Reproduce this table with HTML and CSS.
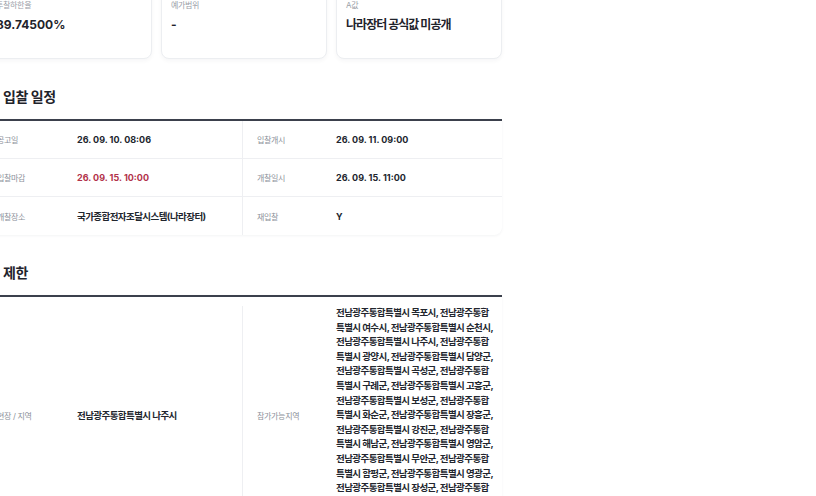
FILE: index.html
```html
<!DOCTYPE html>
<html lang="ko">
<head>
<meta charset="utf-8">
<link rel="stylesheet" href="styles.css">
</head>
<body>
<div class="page">
  <div class="cards">
    <div class="card">
      <div class="card-label ko">투찰하한율</div>
      <div class="card-value">89.74500%</div>
    </div>
    <div class="card">
      <div class="card-label ko">예가범위</div>
      <div class="card-value">-</div>
    </div>
    <div class="card">
      <div class="card-label ko">A값</div>
      <div class="card-value ko-tight">나라장터 공식값 미공개</div>
    </div>
  </div>

  <h2 class="section-title"><span class="title-icon"></span><span>입찰 일정</span></h2>
  <div class="table">
    <div class="row">
      <div class="label ko">공고일</div>
      <div class="value">26. 09. 10. 08:06</div>
      <div class="label ko divider">입찰개시</div>
      <div class="value">26. 09. 11. 09:00</div>
    </div>
    <div class="row">
      <div class="label ko">입찰마감</div>
      <div class="value red">26. 09. 15. 10:00</div>
      <div class="label ko divider">개찰일시</div>
      <div class="value">26. 09. 15. 11:00</div>
    </div>
    <div class="row">
      <div class="label ko">개찰장소</div>
      <div class="value ko-val">국가종합전자조달시스템(나라장터)</div>
      <div class="label ko divider">재입찰</div>
      <div class="value">Y</div>
    </div>
  </div>

  <h2 class="section-title"><span class="title-icon"></span><span>제한</span></h2>
  <div class="table">
    <div class="row tall">
      <div class="label ko">현장 / 지역</div>
      <div class="value ko-val">전남광주통합특별시 나주시</div>
      <div class="label ko divider">참가가능지역</div>
      <div class="value ko-val multi">전남광주통합특별시 목포시, 전남광주통합<br>특별시 여수시, 전남광주통합특별시 순천시,<br>전남광주통합특별시 나주시, 전남광주통합<br>특별시 광양시, 전남광주통합특별시 담양군,<br>전남광주통합특별시 곡성군, 전남광주통합<br>특별시 구례군, 전남광주통합특별시 고흥군,<br>전남광주통합특별시 보성군, 전남광주통합<br>특별시 화순군, 전남광주통합특별시 장흥군,<br>전남광주통합특별시 강진군, 전남광주통합<br>특별시 해남군, 전남광주통합특별시 영암군,<br>전남광주통합특별시 무안군, 전남광주통합<br>특별시 함평군, 전남광주통합특별시 영광군,<br>전남광주통합특별시 장성군, 전남광주통합<br>특별시 완도군, 전남광주통합특별시 진도군,<br>전남광주통합특별시 신안군</div>
    </div>
  </div>
</div>
</body>
</html>
```

FILE: styles.css
```css
* { box-sizing: border-box; }
html, body { margin: 0; padding: 0; background: #ffffff; }
body {
  font-family: Inter, "Noto Sans CJK KR", sans-serif;
  color: #1f232b;
  overflow: hidden;
}
.page {
  width: 519px;
  margin-left: -17px;
  margin-top: -14px;
}
.ko { letter-spacing: -0.04em; }
.ko-tight { letter-spacing: -0.08em; }

.cards {
  display: grid;
  grid-template-columns: repeat(3, 1fr);
  gap: 9px;
  margin-left: 3px;
}
.card {
  background: #fff;
  border: 1px solid #eceef1;
  border-radius: 8px;
  box-shadow: 0 2px 4px rgba(20, 30, 50, 0.04);
  height: 73px;
  padding: 12px 9px;
}
.card-label {
  font-size: 8px;
  color: #9aa0a8;
  line-height: 12px;
}
.card-value {
  margin-top: 6px;
  font-size: 12px;
  font-weight: 700;
  line-height: 16px;
  color: #1f232b;
}

.section-title {
  display: flex;
  align-items: center;
  gap: 6px;
  margin: 29px 0 13px 0;
  font-size: 14px;
  font-weight: 700;
  line-height: 18px;
  letter-spacing: -0.03em;
  color: #1f232b;
}
.title-icon {
  width: 14px;
  height: 14px;
  border-radius: 3px;
  background: #2b3a55;
}

.table {
  border-top: 2px solid #3b404c;
  background: #fff;
  border-radius: 0 0 8px 8px;
  box-shadow: 0 1px 3px rgba(20, 30, 50, 0.05);
}
.row {
  display: grid;
  grid-template-columns: 94px 165px 94px 1fr;
  align-items: center;
  min-height: 38px;
  border-bottom: 1px solid #eeeff2;
}
.row:last-child { border-bottom: none; }
.row.tall { padding: 9px 0; }
.label {
  padding-left: 14px;
  font-size: 8px;
  color: #8c919a;
  align-self: stretch;
  display: flex;
  align-items: center;
}
.label.divider { border-left: 1px solid #eeeff2; }
.value {
  font-size: 9px;
  font-weight: 700;
  color: #22262e;
  padding-right: 6px;
}
.value.ko-val {
  font-size: 9.5px;
  letter-spacing: -0.06em;
}
.value.red { color: #b2334a; }
.value.multi {
  line-height: 14.6px;
}
```
